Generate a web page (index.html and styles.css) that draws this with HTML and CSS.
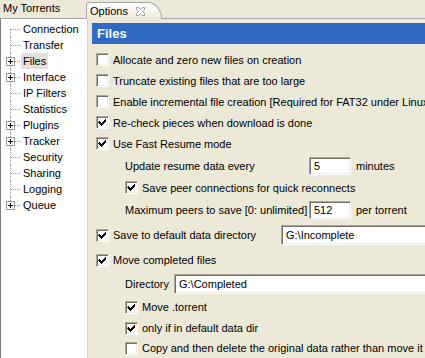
FILE: index.html
```html
<!DOCTYPE html>
<html lang="en">

<head>
    <meta charset="UTF-8">
    <title>Options</title>
    <link rel="stylesheet" href="styles.css">
</head>

<body>
    <div class="tabs">
        <div class="tab">My Torrents</div>
        <div class="tab tab-active">
            Options
            <svg class="tab-close" width="11" height="11" viewBox="0 0 11 11">
                <path d="M1.5 1.5h2l2 2 2-2h2v2l-2 2 2 2v2h-2l-2-2-2 2h-2v-2l2-2-2-2z" fill="#fff" stroke="#9a9a9a" stroke-width="1"/>
            </svg>
        </div>
    </div>

    <div class="main">
        <ul class="tree">
            <li><span class="twig"></span><span class="node">Connection</span></li>
            <li><span class="twig"></span><span class="node">Transfer</span></li>
            <li><span class="twig"><i class="pm"></i></span><span class="node sel">Files</span></li>
            <li><span class="twig"><i class="pm"></i></span><span class="node">Interface</span></li>
            <li><span class="twig"></span><span class="node">IP Filters</span></li>
            <li><span class="twig"></span><span class="node">Statistics</span></li>
            <li><span class="twig"><i class="pm"></i></span><span class="node">Plugins</span></li>
            <li><span class="twig"><i class="pm"></i></span><span class="node">Tracker</span></li>
            <li><span class="twig"></span><span class="node">Security</span></li>
            <li><span class="twig"></span><span class="node">Sharing</span></li>
            <li><span class="twig"></span><span class="node">Logging</span></li>
            <li><span class="twig"><i class="pm"></i></span><span class="node">Queue</span></li>
        </ul>

        <section class="page">
            <h1 class="page-title">Files</h1>

            <div class="opts">
                <div class="row"><span class="cb"></span>Allocate and zero new files on creation</div>
                <div class="row"><span class="cb"></span>Truncate existing files that are too large</div>
                <div class="row"><span class="cb"></span>Enable incremental file creation [Required for FAT32 under Linux]</div>
                <div class="row"><span class="cb on"></span>Re-check pieces when download is done</div>
                <div class="row"><span class="cb on"></span>Use Fast Resume mode</div>

                <div class="row h23 sub">
                    <span class="lbl-num">Update resume data every</span>
                    <span class="field field-num">5</span>
                    <span class="unit">minutes</span>
                </div>
                <div class="row sub"><span class="cb on"></span>Save peer connections for quick reconnects</div>
                <div class="row h24 sub">
                    <span class="lbl-num">Maximum peers to save [0: unlimited]</span>
                    <span class="field field-num">512</span>
                    <span class="unit">per torrent</span>
                </div>

                <div class="row h26">
                    <span class="cb on"></span>
                    <span class="lbl-dir">Save to default data directory</span>
                    <span class="field field-wide">G:\Incomplete</span>
                </div>
                <div class="row h24"><span class="cb on"></span>Move completed files</div>
                <div class="row h24 sub">
                    <span class="lbl-short">Directory</span>
                    <span class="field field-wide">G:\Completed</span>
                </div>
                <div class="row h22 sub"><span class="cb on"></span>Move .torrent</div>
                <div class="row h20 sub"><span class="cb on"></span>only if in default data dir</div>
                <div class="row h20 sub"><span class="cb"></span>Copy and then delete the original data rather than move it</div>
            </div>
        </section>
    </div>
</body>

</html>
```

FILE: styles.css
```css
* {
    padding: 0;
    margin: 0;
    box-sizing: border-box;
}

body {
    width: 425px;
    height: 358px;
    overflow: hidden;
    background-color: #ece9d8;
    font-family: "Liberation Sans", Arial, sans-serif;
    font-size: 11px;
    color: #000;
}

/* tab strip */

.tabs {
    height: 19px;
    display: flex;
    align-items: flex-end;
    border-bottom: 1px solid #a7a6aa;
}

.tab {
    width: 86px;
    height: 18px;
    padding-left: 3px;
    line-height: 17px;
    white-space: nowrap;
}

.tab-active {
    width: 76px;
    height: 17px;
    display: flex;
    align-items: center;
    gap: 7px;
    padding-left: 3px;
    margin-bottom: -1px;
    border: 1px solid #a7a6aa;
    border-bottom: none;
    border-top-left-radius: 4px;
    border-top-right-radius: 14px 17px;
    background: linear-gradient(#ffffff, #ece9d8);
}

.tab-close {
    flex: none;
}

/* tree */

.main {
    display: flex;
    height: 339px;
}

.tree {
    list-style: none;
    width: 88px;
    height: 100%;
    padding-top: 2px;
    background-color: #fff;
    border-left: 1px solid #7f7f7f;
    border-right: 1px solid #d8d5c8;
}

.tree li {
    height: 16px;
    display: flex;
    align-items: center;
}

.twig {
    position: relative;
    width: 20px;
    height: 16px;
    flex: none;
}

.twig::before {
    content: "";
    position: absolute;
    left: 9px;
    top: 0;
    bottom: 0;
    border-left: 1px dotted #a0a0a0;
}

.tree li:first-child .twig::before {
    top: 8px;
}

.tree li:last-child .twig::before {
    bottom: 8px;
}

.twig::after {
    content: "";
    position: absolute;
    left: 10px;
    top: 8px;
    width: 9px;
    border-top: 1px dotted #a0a0a0;
}

.pm {
    position: absolute;
    left: 5px;
    top: 4px;
    z-index: 1;
    width: 9px;
    height: 9px;
    border: 1px solid #919b9c;
    background:
        linear-gradient(#000, #000) 1px 3px / 5px 1px no-repeat,
        linear-gradient(#000, #000) 3px 1px / 1px 5px no-repeat,
        #fff;
}

.node {
    padding: 1px 2px;
    margin-left: 0;
    line-height: 14px;
}

.sel {
    background-color: #e2e1dc;
}

/* options page */

.page {
    flex: 1;
    padding: 4px 0 0 4px;
    min-width: 0;
}

.page-title {
    height: 21px;
    padding-left: 5px;
    line-height: 21px;
    font-size: 13px;
    font-weight: bold;
    color: #fff;
    background-color: #316ac5;
}

.opts {
    margin-top: 5px;
    padding-left: 4px;
    white-space: nowrap;
}

.row {
    height: 21px;
    display: flex;
    align-items: center;
    gap: 4px;
}

.h20 { height: 20px; }
.h22 { height: 22px; }
.h23 { height: 23px; }
.h24 { height: 24px; }
.h26 { height: 26px; }

.sub {
    padding-left: 29px;
}

.cb {
    width: 13px;
    height: 13px;
    flex: none;
    background-color: #fff;
    border: 1px solid;
    border-color: #aca899 #fff #fff #aca899;
    box-shadow: inset 1px 1px #716f64, inset -1px -1px #f1efe2;
}

.cb.on {
    background-image: url("data:image/svg+xml,%3Csvg xmlns='http://www.w3.org/2000/svg' width='11' height='11'%3E%3Cpath d='M2 4h1v1h1v1h1v-1h1v-1h1v-1h1v-1h1v3h-1v1h-1v1h-1v1h-1v1h-1v-1h-1v-1h-1v-1h-1z' fill='%23000'/%3E%3C/svg%3E");
    background-repeat: no-repeat;
}

.field {
    height: 20px;
    padding-left: 4px;
    line-height: 18px;
    background-color: #fff;
    border: 1px solid;
    border-color: #aca899 #fff #fff #aca899;
    box-shadow: inset 1px 1px #716f64, inset -1px -1px #f1efe2;
}

.lbl-num {
    width: 180px;
}

.field-num {
    width: 42px;
    height: 18px;
    line-height: 16px;
}

.unit {
    margin-left: 1px;
}

.lbl-dir {
    width: 164px;
}

.lbl-short {
    width: 45px;
}

.field-wide {
    flex: 1;
    margin-right: -10px;
}
```
